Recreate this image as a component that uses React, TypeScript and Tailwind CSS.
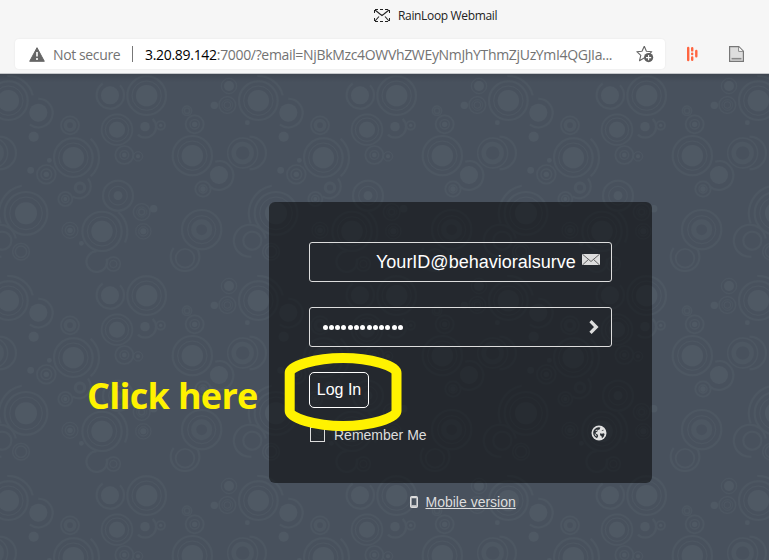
import React from "react";

const FILL = "#4f5964";
const RING = "#4d5762";

type Ring = [radius: number, width: number];
type Bubble = { x: number; y: number; dot: number; rings: Ring[] };

const bubbles: Bubble[] = [
  { x: 25, y: 92, dot: 32, rings: [[44, 3], [58, 6]] },
  { x: 115, y: 128, dot: 27, rings: [] },
  { x: 330, y: 76, dot: 27, rings: [] },
  { x: 440, y: 77, dot: 32, rings: [[44, 3], [58, 6]] },
  { x: 351, y: 179, dot: 24, rings: [[35, 3], [46, 5]] },
  { x: 435, y: 170, dot: 14, rings: [] },
  { x: 482, y: 166, dot: 5, rings: [[13, 5]] },
  { x: 210, y: 166, dot: 0, rings: [[14, 10], [27, 5]] },
  { x: 220, y: 263, dot: 32, rings: [[44, 3], [58, 6]] },
  { x: 373, y: 255, dot: 7, rings: [[13, 4], [27, 5]] },
  { x: 414, y: 259, dot: 6, rings: [[14, 3]] },
  { x: 139, y: 313, dot: 8, rings: [[16, 4], [28, 5]] },
  { x: 240, y: 353, dot: 0, rings: [[14, 9]] },
  { x: 196, y: 387, dot: 6, rings: [[11, 4], [21, 5]] },
  { x: 354, y: 377, dot: 13, rings: [[28, 3], [45, 6]] },
  { x: 78, y: 430, dot: 33, rings: [[49, 3], [64, 6]] },
  { x: 7, y: 512, dot: 0, rings: [[27, 6]] },
  { x: 63, y: 545, dot: 0, rings: [[17, 4], [25, 4]] },
  { x: 306, y: 484, dot: 32, rings: [[44, 3], [59, 6]] },
  { x: 210, y: 481, dot: 8, rings: [[14, 4], [24, 3]] },
  { x: 425, y: 426, dot: 0, rings: [[9, 4], [15, 2], [25, 4]] },
  { x: 461, y: 416, dot: 11, rings: [] },
  { x: 430, y: 484, dot: 9, rings: [[14, 3], [23, 3]] },
  { x: 340, y: 582, dot: 0, rings: [[11, 3], [21, 4]] },
  { x: 561, y: 122, dot: 0, rings: [[8, 4], [14, 4]] },
  { x: 584, y: 163, dot: 8, rings: [[14, 4], [27, 5]] },
  { x: 577, y: 257, dot: 32, rings: [[44, 3], [59, 6]] },
  { x: 728, y: 249, dot: 0, rings: [[27, 13], [45, 4]] },
  { x: 657, y: 315, dot: 27, rings: [] },
  { x: 609, y: 357, dot: 8, rings: [[12, 4], [23, 5]] },
  { x: 605, y: 479, dot: 0, rings: [[24, 15], [42, 3], [59, 6]] },
  { x: 555, y: 565, dot: 0, rings: [[28, 5]] },
  { x: 687, y: 48, dot: 15, rings: [[23, 3]] },
  { x: 643, y: 106, dot: 11, rings: [] },
  { x: 682, y: 105, dot: 0, rings: [[10, 3], [16, 2], [25, 4]] },
  { x: 101, y: 200, dot: 15, rings: [] },
  { x: 92, y: 301, dot: 10, rings: [] },
  { x: 148, y: 271, dot: 7, rings: [] },
  { x: 742, y: 158, dot: 7, rings: [] },
  { x: 244, y: 520, dot: 7, rings: [] },
];

const arcs: string[] = [
  "M22 18 A75 75 0 0 1 98 76",
  "M115 86 A43 43 0 1 1 90 164",
  "M308 41 A41 41 0 1 0 360 46",
  "M458 147 A31 31 0 0 1 414 194",
  "M272 206 A76 76 0 0 1 272 319",
  "M264 326 A36 36 0 0 1 218 380",
  "M65 347 A85 85 0 0 0 2 460",
  "M754 560 A48 48 0 1 1 797 505",
  "M355 427 A76 76 0 0 1 375 517",
  "M290 544 A31 31 0 1 0 320 566",
  "M521 534 A43 43 0 1 0 590 535",
  "M646 275 A43 43 0 1 1 630 350",
  "M-1 298 A48 48 0 0 0 -1 200",
];

function Bubbles() {
  return (
    <g id="bubble-set">
      {bubbles.map((b, i) => (
        <g key={i} fill="none" stroke={RING}>
          {b.dot > 0 && <circle cx={b.x} cy={b.y} r={b.dot} fill={FILL} stroke="none" />}
          {b.rings.map(([r, w], j) => (
            <circle key={j} cx={b.x} cy={b.y} r={r} strokeWidth={w} />
          ))}
        </g>
      ))}
      {arcs.map((d) => (
        <path key={d} d={d} fill="none" stroke={RING} strokeWidth="6" />
      ))}
    </g>
  );
}

function Wallpaper() {
  return (
    <svg className="absolute inset-0 h-full w-full" aria-hidden="true">
      <defs>
        <pattern id="wallpaper" width="750" height="600" patternUnits="userSpaceOnUse" patternTransform="scale(0.33333)">
          <g transform="translate(0 -12)">
            <Bubbles />
            <use href="#bubble-set" x="-750" />
            <use href="#bubble-set" x="750" />
            <use href="#bubble-set" y="600" />
          </g>
        </pattern>
        <linearGradient id="top-shade" x1="0" y1="0" x2="0" y2="1">
          <stop offset="0" stopColor="#000" stopOpacity="0.14" />
          <stop offset="1" stopColor="#000" stopOpacity="0" />
        </linearGradient>
      </defs>
      <rect width="100%" height="100%" fill="#48515d" />
      <rect width="100%" height="100%" fill="url(#wallpaper)" />
      <rect width="100%" height="8" fill="url(#top-shade)" />
    </svg>
  );
}

function BrowserChrome() {
  return (
    <header className="flex h-[74px] flex-col border-b border-[#c4c6c9] bg-[#f6f6f6] font-['Open_Sans','Noto_Sans',sans-serif]">
      <div className="flex h-[39px] items-start pt-[7px] pl-[374px]">
        <svg className="mt-[2px] h-[13px] w-4" viewBox="0 0 16 13" fill="none" stroke="#222">
          <path d="M1 .5h14M1 12.5h14" strokeDasharray="3 2" />
          <path d="M.5 1v3M15.5 1v3M.5 9v3M15.5 9v3" />
          <path d="M1 1l5 4 2 1.5L10 5l5-4M1 12l4-4.5M15 12l-4-4.5" strokeWidth="1.1" />
        </svg>
        <span className="ml-2 text-[12px] leading-[18px] tracking-[-0.34px] whitespace-nowrap text-[#222]">RainLoop Webmail</span>
      </div>
      <div className="flex h-[30px] items-center pl-[15px]">
        <div className="flex h-[30px] w-[650px] items-center rounded bg-white pl-[14px] text-[14px] whitespace-nowrap text-[#737373] shadow-[0_0_2px_rgba(0,0,0,0.08)]">
          <svg className="h-[15px] w-4 shrink-0" viewBox="0 0 16 15">
            <path d="M8 .7 15.3 14.3H.7Z" fill="#666" stroke="#666" strokeLinejoin="round" />
            <path d="M8 5v4.5M8 11v2" stroke="#fff" strokeWidth="1.6" />
          </svg>
          <span className="ml-2 w-[67px] shrink-0 tracking-[-0.38px]">Not secure</span>
          <span className="mx-3 h-4 w-px shrink-0 bg-[#777]" />
          <span className="w-[470px] shrink-0 tracking-[-0.33px]">
            <span className="tracking-[-0.3px] text-black">3.20.89.142</span>:7000/?email=NjBkMzc4OWVhZWEyNmJhYThmZjUzYmI4QGJIa...
          </span>
          <svg className="ml-[21px] h-[18px] w-[18px] shrink-0" viewBox="0 0 18 18" fill="none">
            <path d="M8.3 1.2l2.1 5 5.4.5-3.6 3.5M8.3 1.2L6 6.2l-5.2.5 4 3.7-1.3 5.3 4.6-2.6" stroke="#666" strokeWidth="1.1" strokeLinejoin="round" />
            <circle cx="12.6" cy="12.6" r="4.6" fill="#606060" />
            <path d="M10 12.6h5.2M12.6 10v5.2" stroke="#fff" strokeWidth="1.1" />
          </svg>
        </div>
        <svg className="ml-[21px] h-4 w-3" viewBox="0 0 12 16" fill="none" stroke="#ff6540" strokeWidth="2.4" strokeLinecap="round">
          <path d="M2.2 2v12M6.2 2.2v2.2M6.2 7.8V8M6.2 11.4v2.4M10.3 5v5.2" />
        </svg>
        <svg className="ml-[31px] h-4 w-[15px]" viewBox="0 0 15 16">
          <path d="M.6.6h9.2l4.6 4.6v10.2H.6z" fill="#ddd" stroke="#777" strokeWidth="1.2" />
          <path d="M9.6 1v4.4h4.4" fill="#fff" stroke="#888" />
          <path d="M2.5 12.7h10" stroke="#888" strokeWidth="1.6" />
        </svg>
      </div>
    </header>
  );
}

function LoginCard() {
  return (
    <section className="relative ml-[269px] flex h-[281px] w-[383px] flex-col rounded-[6px] bg-[#010201]/51 px-10 pt-10 text-white">
      <div className="flex h-10 items-center rounded-[3px] border border-[#ddd] pl-[66px]">
        <span className="w-[200px] text-[18px] leading-5 whitespace-nowrap">YourID@behavioralsurve</span>
        <svg className="mb-[5px] ml-[6px] h-[11px] w-[18px]" viewBox="0 0 18 11">
          <rect width="18" height="11" rx="1" fill="#ddd" />
          <path d="M.8.5 9 7.5 17.2.5M1 10.5l5.4-5M17 10.5l-5.4-5" fill="none" stroke="#555" strokeWidth=".9" />
        </svg>
      </div>
      <div className="mt-[25px] flex h-10 items-center justify-between rounded-[3px] border border-[#ddd] pr-[12px] pl-[12.5px]">
        <div className="flex gap-[1.3px]">
          {Array.from({ length: 13 }, (_, i) => (
            <span key={i} className="h-[5px] w-[5px] rounded-full bg-white" />
          ))}
        </div>
        <svg className="h-[14px] w-[10px]" viewBox="0 0 10 14" fill="none" stroke="#ddd" strokeWidth="3.2">
          <path d="M1.5 1.2 7.3 7l-5.8 5.8" />
        </svg>
      </div>
      <button className="mt-[25px] h-9 w-[60px] rounded-[5px] border border-white text-[16px] whitespace-nowrap">Log In</button>
      <div className="mt-[17px] flex h-5 items-center text-[14px] text-[#ddd]">
        <span className="mb-px ml-px h-[15px] w-[15px] border border-[#ddd]" />
        <span className="ml-[9px] leading-5">Remember Me</span>
        <svg className="mr-[5px] mb-[4px] ml-auto h-4 w-4" viewBox="0 0 16 16">
          <circle cx="8" cy="8" r="7.5" fill="#e2e2e2" />
          <path d="M7.6 2.2 9.4 2.6 8.6 4.6 6.8 5 6.4 6.4 4.8 7.4 4.6 8.6 6.6 9.6 7.2 11 6 13.2C3.6 12.2 2.2 10.4 2.2 8 2.2 4.8 4.6 2.6 7.6 2.2Z" fill="#2b3035" />
          <path d="M4.4 5.2l1.8-.8.4.9-1.7 1zM3.4 8.6l2 1.3.2 1.6-1.4-.9z" fill="#e2e2e2" />
          <path d="M9.2 8.2l1.8.6 1.6-.6 1 .8-.8 2.4-1.8 1.8-.6-2.2-1.4-.8z" fill="#2b3035" />
          <path d="M10.8 5.6l1.8-.4" stroke="#2b3035" strokeWidth=".7" />
        </svg>
      </div>
    </section>
  );
}

function Highlight() {
  return (
    <>
      <svg className="absolute top-[352px] left-[284px] h-[80px] w-[118px]" viewBox="284 352 118 80" fill="none">
        <path d="M289.7 373C289.7 366 315 358 343 358S396.5 366 396.5 373V411C396.5 418 371 426 343 426S289.7 418 289.7 411Z" stroke="#fff200" strokeWidth="10" />
      </svg>
      <p className="absolute top-[371px] left-[87px] font-['Open_Sans','Noto_Sans',sans-serif] text-[36px] leading-[50px] font-bold tracking-[-0.7px] whitespace-nowrap text-[#fff200]">
        Click here
      </p>
    </>
  );
}

export default function App() {
  return (
    <div className="relative flex h-[560px] w-[769px] flex-col overflow-hidden font-['Liberation_Sans',Arial,sans-serif]">
      <BrowserChrome />
      <main className="relative flex-1 pt-[128px]">
        <Wallpaper />
        <LoginCard />
        <a className="relative mt-[9px] ml-[410px] flex w-[110px] items-center text-[14px] leading-5 whitespace-nowrap text-[#ddd]">
          <svg className="h-3 w-2" viewBox="0 0 8 12">
            <rect x=".8" y=".8" width="6.4" height="10.4" rx="1" fill="none" stroke="#ddd" strokeWidth="1.6" />
            <path d="M1.5 1.6h5M1.5 10h5" stroke="#ddd" strokeWidth="1.5" />
          </svg>
          <span className="ml-[7.5px] underline">Mobile version</span>
        </a>
      </main>
      <Highlight />
    </div>
  );
}
